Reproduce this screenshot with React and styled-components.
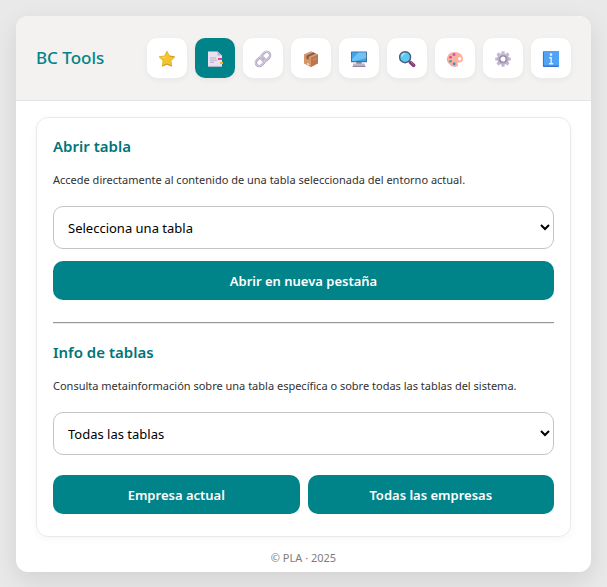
import React, { useState } from 'react';
import styled, { createGlobalStyle } from 'styled-components';

const GlobalStyle = createGlobalStyle`
  *, *::before, *::after { box-sizing: border-box; }
  body {
    margin: 0;
    padding: 16px;
    background: #e9e9e9;
    color: #323130;
    font-family: 'Noto Sans', 'Open Sans', sans-serif;
    font-size: 11px;
  }
`;

const Card = styled.main`
  overflow: hidden;
  border-radius: 12px;
  background: #fff;
  box-shadow: 0 8px 24px rgba(0, 0, 0, 0.1);
`;

const Header = styled.header`
  display: flex;
  align-items: center;
  justify-content: space-between;
  padding: 22px 20px;
  background: #f3f2f1;
  border-bottom: 1px solid #e6e5e4;
`;

const Title = styled.h1`
  margin: 0;
  color: #00848a;
  font-size: 17px;
  font-weight: 500;
  line-height: 24px;
`;

const Nav = styled.nav`
  display: flex;
  gap: 8px;
`;

const NavButton = styled.button`
  display: flex;
  align-items: center;
  justify-content: center;
  width: 40px;
  height: 40px;
  padding: 2px 0 0;
  border: 0;
  border-radius: 10px;
  background: ${(p) => (p.$active ? '#008489' : '#fff')};
  box-shadow: 0 2px 6px rgba(0, 0, 0, 0.05);
  cursor: pointer;
`;

const Icon = styled.svg`
  display: block;
  width: 18px;
  height: 18px;
`;

const Content = styled.div`
  padding: 16px 20px 12px;
`;

const Panel = styled.section`
  padding: 16px 16px 22px;
  border: 1px solid #e9e9e9;
  border-radius: 12px;
  box-shadow: 0 2px 8px rgba(0, 0, 0, 0.04);
`;

const Heading = styled.h2`
  margin: 0 0 12px;
  color: #00757a;
  font-size: 15px;
  font-weight: 600;
  line-height: 24px;
`;

const Description = styled.label`
  display: block;
  margin-bottom: 16px;
  line-height: 20px;
`;

const Select = styled.select`
  display: block;
  width: 100%;
  height: 43px;
  padding: 10px;
  border: 1px solid #c4c4c4;
  border-radius: 10px;
  background-color: #fff;
  color: #000;
  font-family: inherit;
  font-size: 13px;
`;

const Actions = styled.div`
  display: flex;
  gap: 8px;
  margin-top: ${(p) => (p.$spaced ? '20px' : '12px')};
`;

const ActionButton = styled.button`
  flex: 1;
  height: 39px;
  padding: 0 12px;
  border: 0;
  border-radius: 10px;
  background: #008489;
  color: #fff;
  font-family: inherit;
  font-size: 13px;
  font-weight: 600;
  cursor: pointer;
`;

const Divider = styled.hr`
  height: 2px;
  margin: 22px 0 16px;
  border: 0;
  border-top: 1px solid #959595;
  border-bottom: 1px solid #ececec;
`;

const Footer = styled.footer`
  padding-bottom: 5px;
  color: #7d7d7d;
  font-size: 11px;
  line-height: 18px;
  text-align: center;
`;

const icons = {
  star: (
    <>
      <path d="M9 1.4 11.3 6l5.2.8-3.7 3.8.8 5.3L9 14l-4.6 2 .8-5.4L1.5 6.8 6.7 6Z" fill="#f2c52f" stroke="#e6b92f" strokeWidth="1.2" strokeLinejoin="round" />
      <path d="M9 3.2 7.5 6.8 3.3 7.6 7 8.2Z" fill="#ffdc50" />
      <path d="m4.4 16 4.6-2 4.6 2M11.6 6l4.6.9" fill="none" stroke="#cf9835" strokeWidth="1" />
    </>
  ),
  page: (
    <>
      <path d="M2 1.5h9.5L16 5.5v11H2Z" fill="#e9e1f1" />
      <path d="M11.5 1.5v4H16Z" fill="#bfb1cf" />
      <path d="M4 8h6M4 10.2h7M4 12.3h4" stroke="#b9adc9" strokeWidth="1" />
      <path d="M12 8h4v2h-4Z" fill="#e84778" />
      <path d="M14 12h3v2h-3Z" fill="#f0b43b" />
      <path d="M2 16.3h14" stroke="#cbc0d8" strokeWidth=".8" />
    </>
  ),
  link: (
    <g transform="rotate(-45 9 9)" fill="none">
      <rect x=".3" y="5.6" width="10" height="6.8" rx="3.4" stroke="#a99bb8" strokeWidth="2.3" />
      <rect x="7.7" y="5.6" width="10" height="6.8" rx="3.4" stroke="#a99bb8" strokeWidth="2.3" />
      <rect x=".3" y="5.4" width="10" height="6.8" rx="3.4" stroke="#d2c8dd" strokeWidth="1.2" />
      <rect x="7.7" y="5.4" width="10" height="6.8" rx="3.4" stroke="#d2c8dd" strokeWidth="1.2" />
    </g>
  ),
  box: (
    <>
      <path d="m2 4.6 7-3.2 7 3.2v8.7l-7 3.8-7-3.8Z" fill="#c98258" />
      <path d="m2 4.6 7 3.2v9.3l-7-3.8Z" fill="#d79666" />
      <path d="m9 7.8 7-3.2v8.7l-7 3.8Z" fill="#bd744f" />
      <path d="m2 4.6 7-3.2 7 3.2-7 3.2Z" fill="#d49a70" />
      <path d="m4.5 5.7 7-3.2 2 .9-7 3.3v3l-2-1Z" fill="#805445" />
      <path d="m5.2 12.8 2 1v1.8l-2-1Z" fill="#f2dfe0" />
      <path d="m11 10 3.5-1.6" stroke="#d39370" strokeWidth="1" />
    </>
  ),
  monitor: (
    <>
      <path d="M6.5 12h5l.7 3H5.8Z" fill="#8f859c" />
      <path d="M3.5 13.4h11l1.2 3.5H2.3Z" fill="#bdb5c8" />
      <path d="M3 16.4h12.2" stroke="#8c8297" strokeWidth="1" />
      <rect x="1" y="1.5" width="16" height="10.8" rx=".6" fill="#52708c" />
      <path d="M2 2.5h14v8.6H2Z" fill="#37a7f1" />
      <path d="M8.5 2.5H16V8L5.5 11H2V9Z" fill="#72c1f3" />
    </>
  ),
  search: (
    <>
      <path d="m11 11 1.5 1.5" stroke="#685273" strokeWidth="2" />
      <path d="m12.5 12.5 3.2 2.9" stroke="#833d75" strokeWidth="3.5" strokeLinecap="round" />
      <path d="m13 12 3 2.6" stroke="#ad6599" strokeWidth="1" strokeLinecap="round" />
      <circle cx="7.1" cy="7.2" r="5.5" fill="#5ac9ee" stroke="#4c5b80" strokeWidth="1.4" />
      <path d="M3.6 6.7a3.7 3.7 0 0 1 3.5-3" fill="none" stroke="#a8e6fa" strokeWidth="1.3" />
    </>
  ),
  palette: (
    <>
      <path d="M1.1 8.5C1.1 4.6 4.8 1.8 9 2c4.5.1 8 3 8 6.8 0 2.8-1.6 4-4.3 3.8-1.2 0-1.4.8-.8 1.8.7 1.1-.2 2.2-1.7 2.2-5 0-9.1-3.6-9.1-8.1Z" fill="#fbb09b" />
      <path d="M1.2 8c-.1 5 4 8.8 9 8.6" fill="none" stroke="#e69286" strokeWidth=".6" />
      <circle cx="13.7" cy="8.8" r="1.7" fill="#fff" />
      <circle cx="8" cy="4.6" r="1.5" fill="#b65ad5" />
      <circle cx="4.5" cy="7.2" r="1.3" fill="#e6437d" />
      <circle cx="4.5" cy="11.3" r="1.3" fill="#32aaa1" />
      <circle cx="8.1" cy="13.8" r="1.5" fill="#428ceb" />
    </>
  ),
  gear: (
    <>
      <path d="M9 1.2v15.6M1.2 9h15.6M3.5 3.5l11 11M14.5 3.5l-11 11" stroke="#c3b8d1" strokeWidth="3.2" />
      <circle cx="9" cy="9" r="5.8" fill="#b9aec9" />
      <circle cx="9" cy="9" r="3.2" fill="#fff" stroke="#9486a5" strokeWidth="1.3" />
      <path d="M4.8 6.8A5 5 0 0 1 12.5 5" fill="none" stroke="#d2c8dc" strokeWidth="1" />
    </>
  ),
  info: (
    <>
      <rect x="1" y="1" width="16" height="16" rx="1" fill="#468fe8" />
      <path d="M2 1h14.3l.7.7V15H2Z" fill="#50a4f7" />
      <path d="M1.2 16.4h15.4M1.4 2v14" stroke="#3470cf" strokeWidth=".9" />
      <circle cx="9" cy="4.6" r="1.3" fill="#f6f1ff" />
      <path d="M7.2 7.7h2M7 13.7h4.2M9.2 7v7" fill="none" stroke="#eee8fb" strokeWidth="1.4" />
    </>
  ),
};

const sections = [
  ['star', 'Favoritos'],
  ['page', 'Tablas'],
  ['link', 'Enlaces'],
  ['box', 'Extensiones'],
  ['monitor', 'Entorno'],
  ['search', 'Buscar'],
  ['palette', 'Apariencia'],
  ['gear', 'Ajustes'],
  ['info', 'Información'],
];

export default function App() {
  const [active, setActive] = useState('page');

  return (
    <>
      <GlobalStyle />
      <Card>
        <Header>
          <Title>BC Tools</Title>
          <Nav>
            {sections.map(([id, label]) => (
              <NavButton
                key={id}
                type="button"
                aria-label={label}
                aria-pressed={active === id}
                $active={active === id}
                onClick={() => setActive(id)}
              >
                <Icon viewBox="0 0 18 18" aria-hidden="true">{icons[id]}</Icon>
              </NavButton>
            ))}
          </Nav>
        </Header>
        <Content>
          <Panel>
            <Heading>Abrir tabla</Heading>
            <Description htmlFor="open-table">
              Accede directamente al contenido de una tabla seleccionada del entorno actual.
            </Description>
            <Select id="open-table">
              <option>Selecciona una tabla</option>
            </Select>
            <Actions>
              <ActionButton type="button">Abrir en nueva pestaña</ActionButton>
            </Actions>
            <Divider />
            <Heading>Info de tablas</Heading>
            <Description htmlFor="table-info">
              Consulta metainformación sobre una tabla específica o sobre todas las tablas del sistema.
            </Description>
            <Select id="table-info">
              <option>Todas las tablas</option>
            </Select>
            <Actions $spaced>
              <ActionButton type="button">Empresa actual</ActionButton>
              <ActionButton type="button">Todas las empresas</ActionButton>
            </Actions>
          </Panel>
        </Content>
        <Footer>© PLA · 2025</Footer>
      </Card>
    </>
  );
}
